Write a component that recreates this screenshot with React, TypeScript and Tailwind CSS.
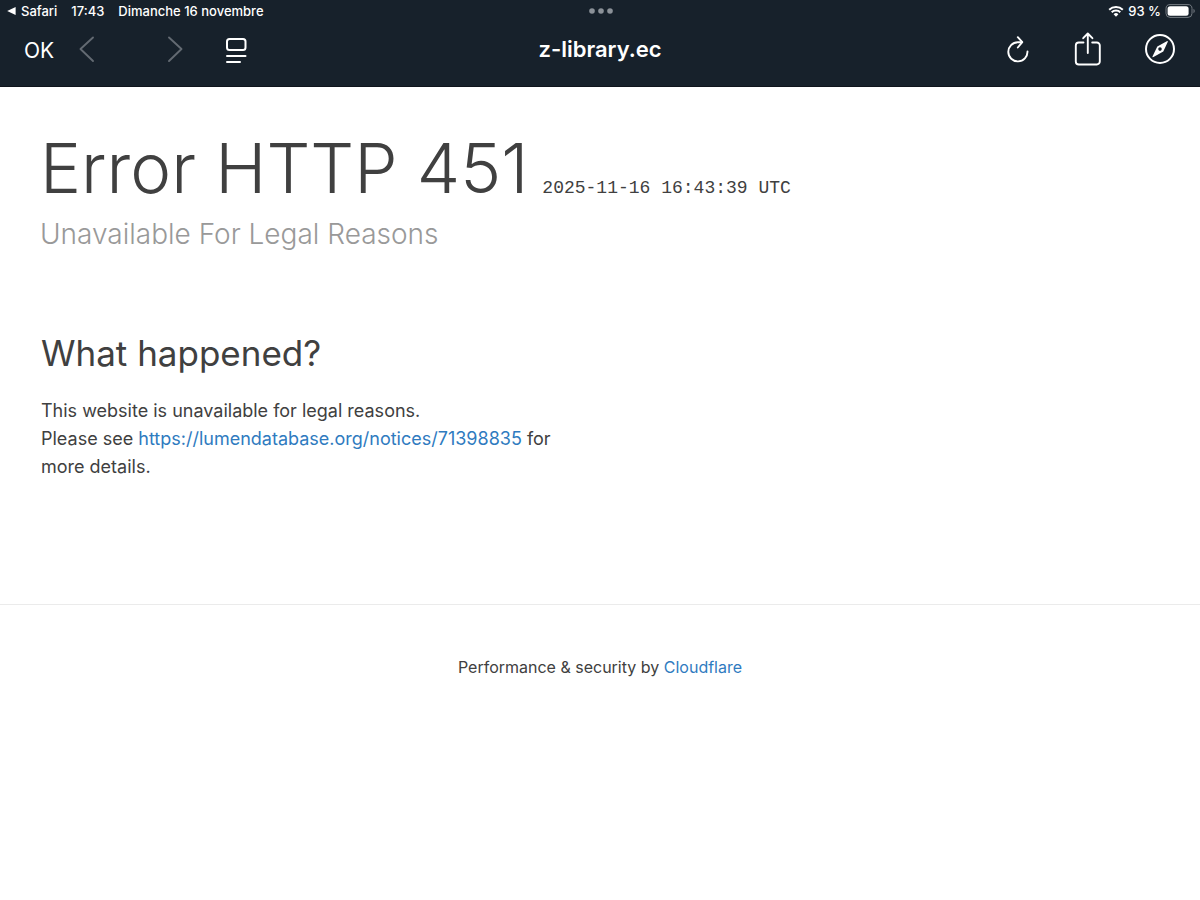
import type { ReactNode } from "react";

function IconButton({ label, className, children }: { label: string; className?: string; children: ReactNode }) {
  return (
    <button type="button" aria-label={label} className={`flex h-10 items-center ${className ?? ""}`}>
      {children}
    </button>
  );
}

function StatusBar() {
  return (
    <div className="grid h-[22px] grid-cols-3 items-center pr-1 pl-1.5 text-[13px] leading-4 font-medium">
      <div className="flex items-center gap-3.5 whitespace-nowrap">
        <a href="#safari" className="flex items-center gap-1">
          <svg width="11" height="10" viewBox="0 0 11 10" fill="currentColor" aria-hidden="true">
            <path d="M1.2 5 9.6.9v8.2z" />
          </svg>
          Safari
        </a>
        <span>17:43</span>
        <span>Dimanche 16 novembre</span>
      </div>
      <svg className="justify-self-center text-[#8b9198]" width="24" height="6" viewBox="0 0 24 6" fill="currentColor" aria-hidden="true">
        <circle cx="3" cy="3" r="2.8" />
        <circle cx="12" cy="3" r="2.8" />
        <circle cx="21" cy="3" r="2.8" />
      </svg>
      <div className="flex items-center gap-1 justify-self-end">
        <svg width="16" height="12" viewBox="0 0 16 12" fill="none" stroke="currentColor" strokeWidth="2" aria-hidden="true">
          <path d="M1.2 4.7a9.7 9.7 0 0 1 13.6 0" />
          <path d="M3.7 7.3a6.1 6.1 0 0 1 8.6 0" />
          <path d="M8 11.7 5.6 9.3a3.4 3.4 0 0 1 4.8 0z" fill="currentColor" stroke="none" />
        </svg>
        <span>93 %</span>
        <svg width="31" height="14" viewBox="0 0 31 14" aria-hidden="true">
          <rect x="1" y="0.6" width="26" height="12.8" rx="4" fill="none" stroke="#747b82" strokeWidth="1" />
          <rect x="2.6" y="2.2" width="21" height="9.6" rx="2.5" fill="#fff" />
          <path d="M28.5 4.8c1.7.7 1.7 3.7 0 4.4z" fill="#747b82" />
        </svg>
      </div>
    </div>
  );
}

function Toolbar() {
  return (
    <div className="grid h-16 grid-cols-[1fr_auto_1fr] items-start px-6 pt-[7px]">
      <div className="flex items-center">
        <button type="button" className="flex h-10 w-[54px] items-center pt-1 text-left text-[21px] leading-6">OK</button>
        <IconButton label="Page précédente" className="w-[88px]">
          <svg width="18" height="28" viewBox="0 0 18 28" fill="none" stroke="#636a72" strokeWidth="1.9" strokeLinecap="round" strokeLinejoin="round">
            <path d="M15 2.5 2.5 14 15 26" />
          </svg>
        </IconButton>
        <IconButton label="Page suivante" className="w-[58px]">
          <svg width="18" height="28" viewBox="0 0 18 28" fill="none" stroke="#636a72" strokeWidth="1.9" strokeLinecap="round" strokeLinejoin="round">
            <path d="M3 2.5 15.5 14 3 26" />
          </svg>
        </IconButton>
        <IconButton label="Format de page">
          <svg width="24" height="28" viewBox="0 0 24 28" fill="none" stroke="currentColor" strokeWidth="2" strokeLinecap="round">
            <rect x="3" y="4" width="18.5" height="11" rx="2.5" />
            <path d="M3 21h18.5M3 27h13" />
          </svg>
        </IconButton>
      </div>
      <h2 className="pt-2 text-[22px] leading-6 font-semibold">z-library.ec</h2>
      <div className="flex items-center justify-self-end">
        <IconButton label="Actualiser" className="w-[69px]">
          <svg width="24" height="30" viewBox="0 0 24 30" fill="none" stroke="currentColor" strokeWidth="1.9" strokeLinecap="round" strokeLinejoin="round">
            <path d="M22.5 17.5A9.6 9.6 0 1 1 12.9 8.2h3.8" />
            <path d="m12.8 3.2 4.500 5-4.500 5.300" />
          </svg>
        </IconButton>
        <IconButton label="Partager" className="w-[70px]">
          <svg width="28" height="36" viewBox="0 0 28 36" fill="none" stroke="currentColor" strokeWidth="1.9" strokeLinecap="round" strokeLinejoin="round">
            <path d="M9.5 11.5H4.8a3 3 0 0 0-3 3v16a3 3 0 0 0 3 3h18a3 3 0 0 0 3-3v-16a3 3 0 0 0-3-3H18.2" />
            <path d="M13.8 22V3M9.2 7.2 13.8 2.5l4.600 4.700" />
          </svg>
        </IconButton>
        <IconButton label="Ouvrir dans Safari">
          <svg width="32" height="32" viewBox="0 0 32 32" fill="none">
            <circle cx="16" cy="16" r="14" stroke="currentColor" strokeWidth="2" />
            <path fillRule="evenodd" fill="currentColor" d="M22.8 8.2c.7-.4 1.2.1.9.8l-4.400 9.600-9.800 5.500c-.8.4-1.3-.1-.9-.9l4.700-9.700zM16 14.300a1.800 1.800 0 1 0 0 3.600 1.800 1.800 0 0 0 0-3.600z" />
          </svg>
        </IconButton>
      </div>
    </div>
  );
}

export default function App() {
  return (
    <div className="min-h-screen bg-white font-['Inter','Liberation_Sans',sans-serif] text-[#404040]">
      <header className="border-b border-[#0f141c] bg-[#17212b] text-white">
        <StatusBar />
        <Toolbar />
      </header>
      <main>
        <div className="px-10 pt-[37px]">
          <div className="flex flex-wrap items-baseline gap-x-3.5">
            <h1 className="text-[69px] leading-[88px] font-[350]">Error HTTP 451</h1>
            <time className="font-['Liberation_Mono',monospace] text-[18px] leading-6">2025-11-16 16:43:39 UTC</time>
          </div>
          <h2 className="mt-0.5 text-[28px] leading-10 font-light text-[#999]">Unavailable For Legal Reasons</h2>
        </div>
        <section className="px-[41px] pt-[75px] pb-[123px]">
          <h2 className="text-[35px] leading-12">What happened?</h2>
          <p className="mt-5 text-[18px] leading-7">
            This website is unavailable for legal reasons.
            <br />
            Please see{" "}
            <a href="https://lumendatabase.org/notices/71398835" className="text-[#2f7bbf]">
              https://lumendatabase.org/notices/71398835
            </a>{" "}
            for
            <br />
            more details.
          </p>
        </section>
      </main>
      <footer className="border-t border-[#ebebeb] pt-[50px] text-center text-[16px] leading-6">
        Performance &amp; security by{" "}
        <a href="https://www.cloudflare.com" className="text-[#2f7bbf]">Cloudflare</a>
      </footer>
    </div>
  );
}
